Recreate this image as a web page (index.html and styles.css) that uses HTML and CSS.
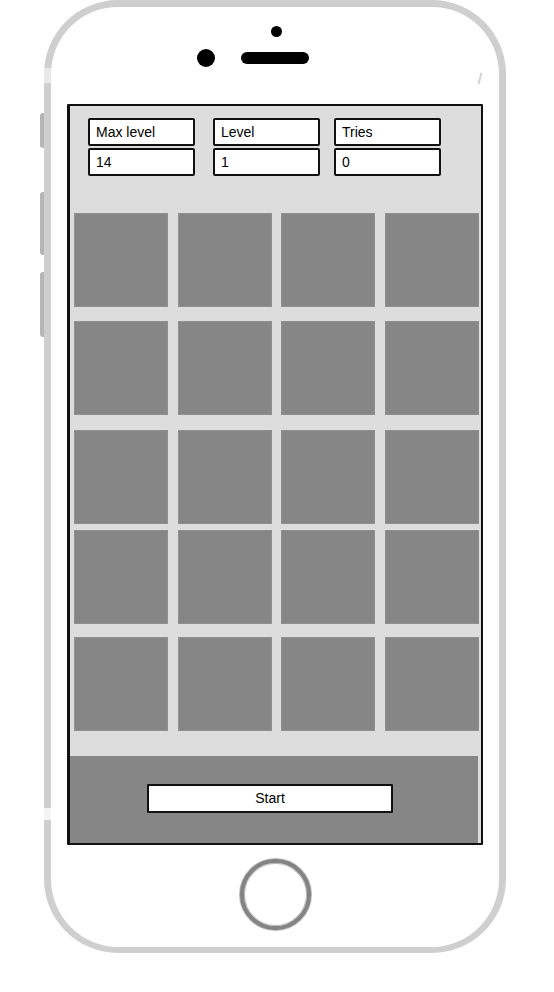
FILE: index.html
```html
<!DOCTYPE html>
<html>
<head>
<meta charset="utf-8">
<link rel="stylesheet" href="styles.css">
</head>
<body>
<div class="side">
  <div class="side-btn b1"></div>
  <div class="side-btn b2"></div>
  <div class="side-btn b3"></div>
</div>
<div class="phone">
  <span class="mark mark-l1"></span>
  <span class="mark mark-l2"></span>
  <span class="tick"></span>
  <div class="earpiece">
    <div class="cam-small"></div>
    <div class="cam-row">
      <div class="cam-big"></div>
      <div class="speaker"></div>
    </div>
  </div>
  <div class="screen">
    <div class="stats">
      <div class="stat">
        <div class="box">Max level</div>
        <div class="box">14</div>
      </div>
      <div class="stat stat-level">
        <div class="box">Level</div>
        <div class="box">1</div>
      </div>
      <div class="stat stat-tries">
        <div class="box">Tries</div>
        <div class="box">0</div>
      </div>
    </div>
    <div class="grid">
      <div class="row r1"><div class="cell"></div><div class="cell"></div><div class="cell"></div><div class="cell"></div></div>
      <div class="row r2"><div class="cell"></div><div class="cell"></div><div class="cell"></div><div class="cell"></div></div>
      <div class="row r3"><div class="cell"></div><div class="cell"></div><div class="cell"></div><div class="cell"></div></div>
      <div class="row r4"><div class="cell"></div><div class="cell"></div><div class="cell"></div><div class="cell"></div></div>
      <div class="row r5"><div class="cell"></div><div class="cell"></div><div class="cell"></div><div class="cell"></div></div>
    </div>
    <div class="footer">
      <div class="start">Start</div>
    </div>
  </div>
  <div class="home"></div>
</div>
</body>
</html>
```
FILE: styles.css
```css
html, body {
  margin: 0;
  padding: 0;
  background: #ffffff;
}
body {
  display: flex;
  align-items: flex-start;
  font-family: "Liberation Sans", Arial, sans-serif;
  color: #000;
}
.side {
  margin-left: 40px;
  width: 4px;
  display: flex;
  flex-direction: column;
}
.side-btn {
  width: 4px;
  background: #b6b6b6;
  border-radius: 3px 0 0 3px;
}
.b1 { margin-top: 113px; height: 35px; }
.b2 { margin-top: 44px; height: 63px; }
.b3 { margin-top: 17px; height: 65px; }

.phone {
  position: relative;
  box-sizing: border-box;
  width: 462px;
  height: 953px;
  border: 7px solid #cfcfcf;
  border-bottom-width: 6px;
  border-radius: 74px;
  background: #fff;
}
.mark {
  position: absolute;
  left: -7px;
  width: 7px;
  background: #e9e9e9;
}
.mark-l1 { top: 61px; height: 15px; }
.mark-l2 { top: 801px; height: 12px; background: #f4f4f4; }
.tick {
  position: absolute;
  left: 428px;
  top: 66px;
  width: 2px;
  height: 11px;
  background: #d2d2d2;
  transform: skewX(-15deg);
}

.earpiece {
  box-sizing: border-box;
  height: 97px;
  padding-top: 19px;
}
.cam-small {
  margin-left: 220px;
  width: 11px;
  height: 11px;
  border-radius: 50%;
  background: #000;
}
.cam-row {
  margin-top: 12px;
  margin-left: 146px;
  display: flex;
  align-items: center;
  gap: 26px;
}
.cam-big {
  width: 18px;
  height: 18px;
  border-radius: 50%;
  background: #000;
}
.speaker {
  width: 68px;
  height: 12px;
  border-radius: 6px;
  background: #000;
}

.screen {
  margin-left: 16px;
  box-sizing: border-box;
  width: 416px;
  height: 741px;
  border: 2px solid #111;
  border-left-width: 3px;
  border-radius: 1px;
  background: #dddddd;
  display: flex;
  flex-direction: column;
}
.stats {
  display: flex;
  padding: 12px 0 0 18px;
}
.stat {
  display: flex;
  flex-direction: column;
  gap: 2px;
  width: 107px;
}
.stat-level { margin-left: 18px; }
.stat-tries { margin-left: 14px; }
.box {
  box-sizing: border-box;
  height: 28px;
  border: 2px solid #111;
  border-radius: 2px;
  background: #fff;
  font-size: 14px;
  line-height: 24px;
  padding-left: 6px;
  white-space: nowrap;
}
.grid {
  margin-top: 37px;
  padding-left: 4px;
  display: flex;
  flex-direction: column;
}
.row {
  width: 405px;
  display: flex;
  justify-content: space-between;
}
.r2 { margin-top: 14px; }
.r3 { margin-top: 15px; }
.r4 { margin-top: 6px; }
.r5 { margin-top: 13px; }
.cell {
  box-sizing: border-box;
  width: 94px;
  height: 94px;
  background: #868686;
  border: 1px solid #8f8f8f;
}
.footer {
  margin-top: 25px;
  margin-right: 3px;
  flex: 1;
  background: #868686;
}
.start {
  box-sizing: border-box;
  margin: 28px 0 0 77px;
  width: 246px;
  height: 29px;
  border: 2px solid #111;
  border-radius: 1px;
  background: #fff;
  font-size: 14px;
  line-height: 25px;
  text-align: center;
}
.home {
  box-sizing: border-box;
  margin: 14px 0 0 189px;
  width: 71px;
  height: 71px;
  border-radius: 50%;
  border: 4px solid #838383;
  box-shadow: 0 0 0 1px #b9b9b9, inset 0 0 0 1px #b9b9b9;
  background: #fff;
}
```
